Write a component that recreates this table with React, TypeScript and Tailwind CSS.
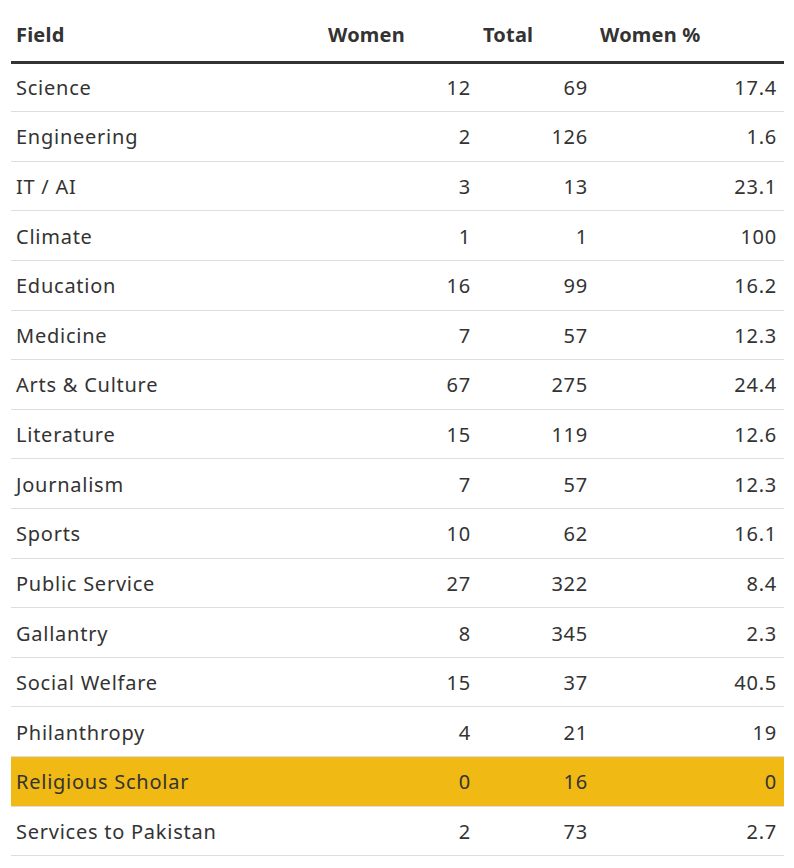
const rows: [string, number, number, number | string][] = [
  ["Science", 12, 69, 17.4],
  ["Engineering", 2, 126, 1.6],
  ["IT / AI", 3, 13, 23.1],
  ["Climate", 1, 1, 100],
  ["Education", 16, 99, 16.2],
  ["Medicine", 7, 57, 12.3],
  ["Arts & Culture", 67, 275, 24.4],
  ["Literature", 15, 119, 12.6],
  ["Journalism", 7, 57, 12.3],
  ["Sports", 10, 62, 16.1],
  ["Public Service", 27, 322, 8.4],
  ["Gallantry", 8, 345, 2.3],
  ["Social Welfare", 15, 37, 40.5],
  ["Philanthropy", 4, 21, 19],
  ["Religious Scholar", 0, 16, 0],
  ["Services to Pakistan", 2, 73, 2.7],
];

export default function App() {
  return (
    <div className="bg-white w-[794px] h-[868px] px-[11px] pt-[11px] text-[#333]" style={{ fontFamily: "'Noto Sans', 'Open Sans', sans-serif" }}>
      <table className="w-[773px] border-collapse table-fixed text-[20px]">
        <colgroup>
          <col className="w-[311px]" />
          <col className="w-[155px]" />
          <col className="w-[117px]" />
          <col className="w-[190px]" />
        </colgroup>
        <thead>
          <tr className="border-b-[3px] border-[#333] h-[51px] tracking-[0.2px]">
            <th className="text-left font-bold pl-[5px] pb-[2px]">Field</th>
            <th className="text-left font-bold pl-[6px] pb-[2px]">Women</th>
            <th className="text-left font-bold pl-[6px] pb-[2px]">Total</th>
            <th className="text-left font-bold pl-[6px] pb-[2px]">Women %</th>
          </tr>
        </thead>
        <tbody className="tracking-[0.75px]">
          {rows.map(([field, w, t, p]) => {
            const hl = field === "Religious Scholar";
            return (
              <tr key={field} className={`h-[49.62px] border-b border-[#dddddd] ${hl ? "bg-[#f0b913]" : ""}`}>
                <td className="pl-[5px] pt-[2px]">{field}</td>
                <td className="text-right pr-[6px] pt-[2px]">{w}</td>
                <td className="text-right pr-[6px] pt-[2px]">{t}</td>
                <td className="text-right pr-[7px] pt-[2px]">{p}</td>
              </tr>
            );
          })}
        </tbody>
      </table>
    </div>
  );
}
